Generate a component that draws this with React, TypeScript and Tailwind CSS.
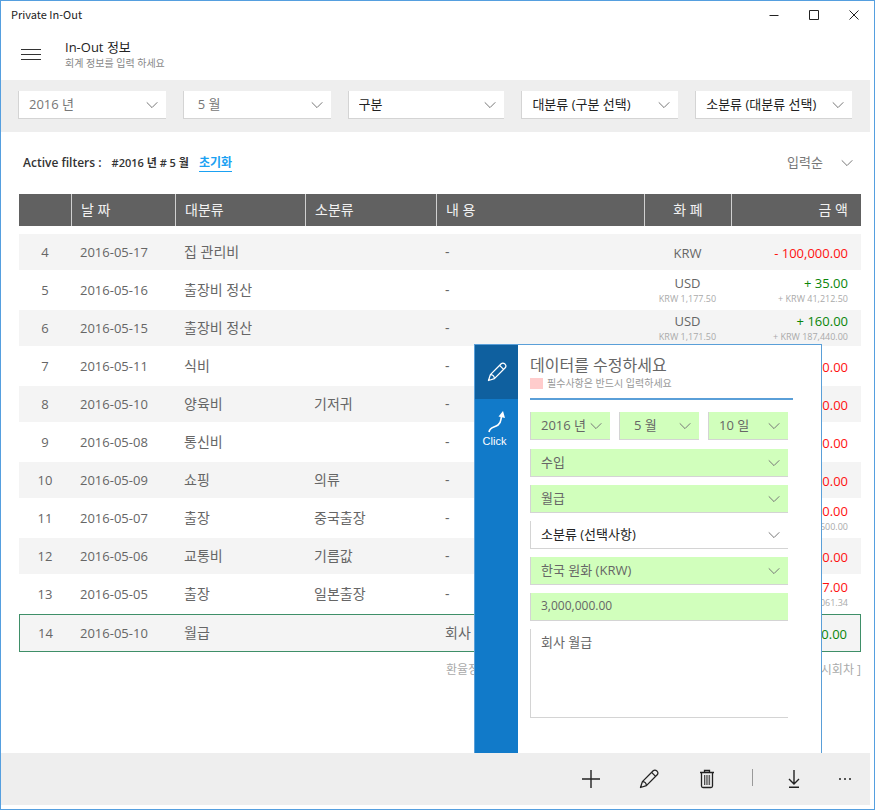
import { useState, type ReactNode, type SelectHTMLAttributes } from "react";

type Sub = { rate: string; amount: string };
type Entry = {
  no: number;
  date: string;
  major: string;
  minor?: string;
  memo: string;
  currency: string;
  amount: string;
  sub?: Sub;
};

const ENTRIES: Entry[] = [
  { no: 4, date: "2016-05-17", major: "집 관리비", memo: "-", currency: "KRW", amount: "- 100,000.00" },
  { no: 5, date: "2016-05-16", major: "출장비 정산", memo: "-", currency: "USD", amount: "+ 35.00", sub: { rate: "KRW 1,177.50", amount: "+ KRW 41,212.50" } },
  { no: 6, date: "2016-05-15", major: "출장비 정산", memo: "-", currency: "USD", amount: "+ 160.00", sub: { rate: "KRW 1,171.50", amount: "+ KRW 187,440.00" } },
  { no: 7, date: "2016-05-11", major: "식비", memo: "-", currency: "KRW", amount: "- 50,000.00" },
  { no: 8, date: "2016-05-10", major: "양육비", minor: "기저귀", memo: "-", currency: "KRW", amount: "- 30,000.00" },
  { no: 9, date: "2016-05-08", major: "통신비", memo: "-", currency: "KRW", amount: "- 60,000.00" },
  { no: 10, date: "2016-05-09", major: "쇼핑", minor: "의류", memo: "-", currency: "KRW", amount: "- 80,000.00" },
  { no: 11, date: "2016-05-07", major: "출장", minor: "중국출장", memo: "-", currency: "CNY", amount: "- 40.00", sub: { rate: "KRW 190.00", amount: "- KRW 7,600.00" } },
  { no: 12, date: "2016-05-06", major: "교통비", minor: "기름값", memo: "-", currency: "KRW", amount: "- 70,000.00" },
  { no: 13, date: "2016-05-05", major: "출장", minor: "일본출장", memo: "-", currency: "USD", amount: "- 47.00", sub: { rate: "KRW 1,171.52", amount: "- KRW 55,061.34" } },
  { no: 14, date: "2016-05-10", major: "월급", memo: "회사 월급", currency: "KRW", amount: "+ 3,000,000.00" },
];

function Chevron() {
  return (
    <svg
      viewBox="0 0 12 7"
      className="pointer-events-none absolute top-1/2 right-2 h-[7px] w-3 -translate-y-1/2"
      fill="none"
      stroke="currentColor"
      aria-hidden
    >
      <path d="M.7.8 6 6.1 11.3.8" />
    </svg>
  );
}

type SelectProps = SelectHTMLAttributes<HTMLSelectElement> & {
  label: string;
  text: string;
  tone: string;
  indent?: boolean;
};

function Select({ label, text, tone, indent, ...rest }: SelectProps) {
  return (
    <div className="relative text-[#777]">
      <select
        aria-label={label}
        className={`block h-7 w-full appearance-none border-b border-l border-[#d4d4d4] pt-px pr-6 text-[13px] ${indent ? "pl-3.5" : "pl-2.5"} ${tone}`}
        {...rest}
      >
        <option>{text}</option>
      </select>
      <Chevron />
    </div>
  );
}

function PencilIcon() {
  return (
    <svg viewBox="0 0 20 20" className="size-5" fill="none" stroke="currentColor" strokeWidth="1.3" strokeLinejoin="round" aria-hidden>
      <path d="M1.5 18.5 3.4 12.6 14.2 1.8a2.4 2.4 0 0 1 3.4 0l.6.6a2.4 2.4 0 0 1 0 3.4L7.4 16.6z" />
      <path d="m12.6 3.4 4 4M3.4 12.6c2.200 0 4 1.800 4 4" />
    </svg>
  );
}

function BarButton({ label, width, children }: { label: string; width: string; children: ReactNode }) {
  return (
    <button type="button" aria-label={label} className={`flex h-full items-center justify-center ${width}`}>
      {children}
    </button>
  );
}

function TitleBar() {
  return (
    <div className="flex h-[27px] items-center justify-between pr-[15px] pl-2.5">
      <span className="font-['Noto_Sans_CJK_KR',sans-serif] text-[11px] text-[#222]">Private In-Out</span>
      <div className="flex gap-[30px] text-[#222]">
        <button type="button" aria-label="최소화">
          <svg viewBox="0 0 10 10" className="size-2.5" stroke="currentColor"><path d="M.5 5.5h9" /></svg>
        </button>
        <button type="button" aria-label="최대화">
          <svg viewBox="0 0 10 10" className="size-2.5" fill="none" stroke="currentColor"><path d="M.5.5h9v9h-9z" /></svg>
        </button>
        <button type="button" aria-label="닫기">
          <svg viewBox="0 0 10 10" className="size-2.5" fill="none" stroke="currentColor"><path d="m.5.5 9 9m0-9-9 9" /></svg>
        </button>
      </div>
    </div>
  );
}

function EntryTable({ selected, onSelect }: { selected: number; onSelect: (no: number) => void }) {
  const th = "border-l border-[#d0d0d0] px-[9px] font-normal";
  return (
    <table className="w-full table-fixed border-separate border-spacing-0 text-sm text-[#666]">
      <colgroup>
        <col className="w-[52px]" />
        <col className="w-[104px]" />
        <col className="w-[130px]" />
        <col className="w-[131px]" />
        <col />
        <col className="w-[87px]" />
        <col className="w-[130px]" />
      </colgroup>
      <thead className="text-[#f2f2f2]">
        <tr className="h-8 bg-[#616161] text-left">
          <th aria-label="번호" />
          <th className={th}>날 짜</th>
          <th className={th}>대분류</th>
          <th className={th}>소분류</th>
          <th className={th}>내 용</th>
          <th className={`${th} text-center`}>화 폐</th>
          <th className="border-l border-[#d0d0d0] pr-[13px] text-right font-normal">금 액</th>
        </tr>
      </thead>
      <tbody className="before:block before:h-2 before:content-['']">
        {ENTRIES.map((row, i) => {
          const active = row.no === selected;
          const td = active ? "border-y border-[#3f8f68]" : "border-b-2 border-white";
          const color = row.amount.startsWith("-") ? "text-[#f11]" : "text-[#0a860a]";
          return (
            <tr
              key={row.no}
              onClick={() => onSelect(row.no)}
              className={`h-[38px] ${i % 2 === 0 ? "bg-[#f4f4f4]" : "bg-white"}`}
            >
              <td className={`${td} text-center text-[13px] ${active ? "border-l" : ""}`}>{row.no}</td>
              <td className={`${td} pl-[9px] text-[13px]`}>{row.date}</td>
              <td className={`${td} pl-[9px]`}>{row.major}</td>
              <td className={`${td} pl-[9px]`}>{row.minor}</td>
              <td className={`${td} pl-[9px]`}>{row.memo}</td>
              <td className={`${td} pt-0.5 text-center text-[13px] leading-4`}>
                {row.currency}
                {row.sub && <div className="text-[9px] text-[#aaa]">{row.sub.rate}</div>}
              </td>
              <td className={`${td} pt-0.5 pr-[13px] text-right text-[13px] leading-4 ${color} ${active ? "border-r" : ""}`}>
                {row.amount}
                {row.sub && <div className="text-[9px] text-[#aaa]">{row.sub.amount}</div>}
              </td>
            </tr>
          );
        })}
      </tbody>
    </table>
  );
}

function EditPanel() {
  const [amount, setAmount] = useState("3,000,000.00");
  const [memo, setMemo] = useState("회사 월급");
  const green = "bg-[#d1ffbc] text-[#666]";

  return (
    <section className="absolute right-[52px] bottom-0 flex h-[409px] w-[348px] border border-b-0 border-[#5a9fd8] bg-white">
      <div className="w-[43px] shrink-0 bg-[#117ac9] text-white">
        <button type="button" aria-label="수정" className="flex h-[54px] w-full items-center justify-center bg-[#0f609f]">
          <PencilIcon />
        </button>
        <button type="button" className="flex w-full flex-col items-center pt-3 pr-1 font-['Liberation_Sans'] text-[11px] leading-4">
          <svg viewBox="0 0 20 22" className="ml-1 h-[22px] w-5" fill="none" stroke="currentColor" strokeWidth="1.6" aria-hidden>
            <path d="M2 21c1-6 5-4 9-7 4-3 2-5 4-10" />
            <path d="m11.500 5.500 4.500-5.500 2 7z" fill="currentColor" stroke="none" />
          </svg>
          Click
        </button>
      </div>
      <form className="min-w-0 flex-1 pr-7 pl-3">
        <header className="border-b-2 border-[#5a9fd8] pt-[9px] pb-2">
          <h2 className="text-base leading-[22px] text-[#666]">데이터를 수정하세요</h2>
          <p className="flex items-center gap-1 text-[10px] leading-[14px] text-[#999]">
            <span className="h-[11px] w-[13px] bg-[#ffcccc]" />
            필수사항은 반드시 입력하세요
          </p>
        </header>
        <div className="mt-3 mr-[5px] grid gap-2">
          <div className="mb-px grid grid-cols-3 gap-[9px]">
            <Select label="년" text="2016 년" tone={green} />
            <Select label="월" text="5 월" tone={green} indent />
            <Select label="일" text="10 일" tone={green} />
          </div>
          <Select label="구분" text="수입" tone={green} />
          <Select label="대분류" text="월급" tone={green} />
          <Select label="소분류" text="소분류 (선택사항)" tone="bg-white text-[#222]" />
          <Select label="화폐" text="한국 원화 (KRW)" tone={green} />
          <input
            aria-label="금액"
            value={amount}
            onChange={(e) => setAmount(e.target.value)}
            className={`h-7 w-full border-b border-l border-[#d4d4d4] px-2.5 pb-0.5 text-xs ${green}`}
          />
          <textarea
            aria-label="내용"
            value={memo}
            onChange={(e) => setMemo(e.target.value)}
            className="h-[89px] w-full resize-none border-b border-l border-[#d4d4d4] px-2.5 py-1 text-[13px] leading-[18px] text-[#666]"
          />
        </div>
      </form>
    </section>
  );
}

export default function App() {
  const [selected, setSelected] = useState(14);
  const gray = "bg-white text-[#777]";
  const dark = "bg-white text-[#222]";

  return (
    <div className="flex min-h-screen flex-col border border-[#559fdf] bg-white pb-1 font-['Open_Sans','Noto_Sans_CJK_KR',sans-serif]">
      <TitleBar />
      <header className="flex h-[52px] items-center gap-6 pl-5">
        <button type="button" aria-label="메뉴" className="text-[#333]">
          <svg viewBox="0 0 20 11" className="h-[11px] w-5" stroke="currentColor"><path d="M0 .5h20M0 5.500h20M0 10.500h20" /></svg>
        </button>
        <div>
          <h1 className="text-[13px] leading-[18px] text-[#222]">In-Out 정보</h1>
          <p className="text-[10px] leading-[14px] text-[#888]">회계 정보를 입력 하세요</p>
        </div>
      </header>

      <div className="mr-1 grid h-[52px] shrink-0 grid-cols-[148fr_148fr_157fr_157fr_157fr] items-center gap-[17px] bg-[#eee] pr-[18px] pb-[3px] pl-[17px]">
        <Select label="년" text="2016 년" tone={gray} />
        <Select label="월" text="5 월" tone={gray} indent />
        <Select label="구분" text="구분" tone={dark} />
        <Select label="대분류" text="대분류 (구분 선택)" tone={dark} />
        <Select label="소분류" text="소분류 (대분류 선택)" tone={dark} />
      </div>

      <main className="relative flex-1 pr-[13px] pl-[18px]">
        <div className="flex h-[62px] items-center pl-1 text-xs font-semibold text-[#333]">
          <span>Active filters :</span>
          <span className="ml-2.5 text-[11px]">#2016 년 # 5 월</span>
          <a href="#reset" className="ml-2.5 border-b border-[#1ba1f2] leading-4 text-[#1ba1f2]">초기화</a>
          <div className="relative ml-auto font-normal text-[#777]">
            <select aria-label="정렬" className="w-[78px] appearance-none pl-1 text-[13px]">
              <option>입력순</option>
            </select>
            <Chevron />
          </div>
        </div>
        <EntryTable selected={selected} onSelect={setSelected} />
        <p className="mt-2.5 ml-[427px] flex justify-between text-xs text-[#aaa]">
          <span>환율정보 : [ 외환은행</span>
          <span>고시회차 ]</span>
        </p>
        <EditPanel />
      </main>

      <footer className="mr-1 flex h-[52px] items-center justify-end bg-[#eee] text-[#222]">
        <BarButton label="추가" width="w-[58px]">
          <svg viewBox="0 0 18 18" className="size-[18px]" stroke="currentColor" strokeWidth="1.4"><path d="M9 0v18M0 9h18" /></svg>
        </BarButton>
        <BarButton label="수정" width="w-[58px]">
          <PencilIcon />
        </BarButton>
        <BarButton label="삭제" width="w-[58px]">
          <svg viewBox="0 0 16 20" className="h-5 w-4" fill="none" stroke="currentColor" strokeWidth="1.3">
            <path d="M1 3.500h14M5.500 3.500v-2h5v2M2.500 3.500V17q0 1.500 1.500 1.500h8q1.500 0 1.500-1.500V3.500" />
            <path d="M5.500 6v10M7.200 6v10M8.900 6v10M10.600 6v10" strokeWidth=".8" />
          </svg>
        </BarButton>
        <div className="flex w-8 justify-center pb-1">
          <span className="h-[17px] w-px bg-[#999]" />
        </div>
        <BarButton label="내려받기" width="w-[52px]">
          <svg viewBox="0 0 12 18" className="h-[18px] w-3" fill="none" stroke="currentColor" strokeWidth="1.4">
            <path d="M6 0v14M1 9l5 5 5-5M1 17.300h10" />
          </svg>
        </BarButton>
        <BarButton label="더보기" width="w-[50px]">
          <svg viewBox="0 0 14 4" className="h-1 w-3.5" fill="currentColor">
            <circle cx="2" cy="2" r="1" />
            <circle cx="7" cy="2" r="1" />
            <circle cx="12" cy="2" r="1" />
          </svg>
        </BarButton>
      </footer>
    </div>
  );
}
